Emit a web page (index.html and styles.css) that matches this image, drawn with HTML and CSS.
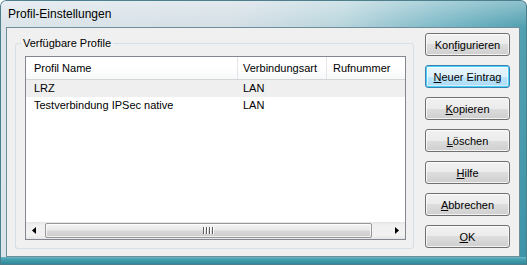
FILE: index.html
```html
<!DOCTYPE html>
<html lang="de">
<head>
  <meta charset="UTF-8">
  <title>Profil-Einstellungen</title>
  <link rel="stylesheet" href="styles.css">
</head>
<body>
  <div class="window">
    <div class="titlebar">Profil-Einstellungen</div>
    <div class="client">
      <fieldset class="group">
        <legend>Verfügbare Profile</legend>
        <div class="listview">
          <div class="lv-header">
            <div class="col col-name">Profil Name</div>
            <div class="col col-type">Verbindungsart</div>
            <div class="col col-num">Rufnummer</div>
          </div>
          <div class="lv-row hot">
            <div class="col col-name">LRZ</div>
            <div class="col col-type">LAN</div>
            <div class="col col-num"></div>
          </div>
          <div class="lv-row">
            <div class="col col-name">Testverbindung IPSec native</div>
            <div class="col col-type">LAN</div>
            <div class="col col-num"></div>
          </div>

          <!-- horizontale Scrollleiste -->
          <div class="hscroll">
            <div class="sb-btn">
              <svg width="5" height="7" viewBox="0 0 5 7"><path d="M4 0 L0 3.5 L4 7 Z" fill="#000"/></svg>
            </div>
            <div class="sb-track">
              <div class="sb-thumb">
                <span class="grip"><i></i><i></i><i></i><i></i></span>
              </div>
            </div>
            <div class="sb-btn">
              <svg width="5" height="7" viewBox="0 0 5 7"><path d="M1 0 L5 3.5 L1 7 Z" fill="#000"/></svg>
            </div>
          </div>
        </div>
      </fieldset>

      <div class="buttons">
        <button class="btn">Kon<u>f</u>igurieren</button>
        <button class="btn focus"><u>N</u>euer Eintrag</button>
        <button class="btn"><u>K</u>opieren</button>
        <button class="btn"><u>L</u>öschen</button>
        <button class="btn"><u>H</u>ilfe</button>
        <button class="btn"><u>A</u>bbrechen</button>
        <button class="btn"><u>O</u>K</button>
      </div>
    </div>
  </div>
</body>
</html>
```

FILE: styles.css
```css
body {
  margin: 0;
  font-family: "Liberation Sans", Arial, sans-serif;
  font-size: 11px;
  color: #000;
  background: #fff;
}

.window {
  width: 527px;
  height: 265px;
  box-sizing: border-box;
  padding: 0 7px 8px 6px;
  display: flex;
  flex-direction: column;
  background:
    linear-gradient(to top, #2c8596 0, #49a2b2 6px, #6fb6c3 8px, transparent 8px),
    linear-gradient(to bottom, rgba(255,255,255,0.35), rgba(255,255,255,0) 27px),
    linear-gradient(100deg, #dce5ea 0%, #d3dee5 42%, #b9d5dd 60%, #7ab8c6 78%, #3b93a6 100%);
  box-shadow: inset 0 0 0 1px #4d7f8c;
  border-radius: 6px 6px 0 0;
}

.titlebar {
  height: 27px;
  line-height: 28px;
  padding-left: 2px;
  font-size: 12px;
  color: #000;
}

.client {
  flex: 1;
  display: flex;
  align-items: flex-start;
  gap: 11px;
  padding: 5px 7px 7px 8px;
  background: #f0f0f0;
  border: 1px solid #6e8f9a;
}

.group {
  margin: 3px 0 0 0;
  width: 399px;
  height: 213px;
  box-sizing: border-box;
  padding: 0 5px 8px 5px;
  border: 1px solid #d5dfe5;
  border-radius: 3px;
  display: flex;
}

.group legend {
  padding: 0 2px;
  line-height: 14px;
}

.listview {
  margin: 6px 0 0 4px;
  width: 381px;
  height: 184px;
  box-sizing: border-box;
  border: 1px solid #828790;
  background: #fff;
  display: flex;
  flex-direction: column;
}

.lv-header {
  display: flex;
  height: 22px;
  border-bottom: 1px solid #d5d5d5;
  background: linear-gradient(#ffffff, #ffffff 50%, #f7f8f9);
}

.lv-header .col {
  line-height: 22px;
  border-right: 1px solid #e3e5e8;
}

.lv-header .col-num {
  border-right: 0;
}

.lv-row {
  display: flex;
  height: 17px;
  line-height: 17px;
}

.lv-row.hot {
  background: #efefef;
}

.col {
  box-sizing: border-box;
  white-space: nowrap;
}

.col-name {
  width: 212px;
  padding-left: 8px;
}

.col-type {
  width: 89px;
  padding-left: 5px;
}

.col-num {
  width: 70px;
  padding-left: 6px;
}

.hscroll {
  margin-top: auto;
  height: 17px;
  display: flex;
  background: linear-gradient(#e3e3e3, #f0f0f0 3px, #f2f2f2 13px, #e6e6e6);
}

.sb-btn {
  width: 17px;
  display: flex;
  align-items: center;
  justify-content: center;
}

.sb-track {
  flex: 1;
  padding: 1px 0 1px 2px;
  display: flex;
}

.sb-thumb {
  width: 327px;
  box-sizing: border-box;
  border: 1px solid #979797;
  border-radius: 2px;
  background: linear-gradient(#f4f4f4, #e9e9e9 45%, #d8d8d8 55%, #cdcdcd);
  box-shadow: inset 0 0 0 1px rgba(255,255,255,0.7);
  display: flex;
  align-items: center;
  justify-content: center;
}

.grip {
  display: flex;
  gap: 1px;
  height: 7px;
}

.grip i {
  width: 1px;
  background: #5f5f5f;
  box-shadow: 1px 0 0 #fff;
  margin-right: 1px;
}

.buttons {
  display: flex;
  flex-direction: column;
  gap: 9px;
}

.btn {
  width: 85px;
  height: 23px;
  padding: 0;
  font-family: inherit;
  font-size: 11px;
  color: #000;
  border: 1px solid #707070;
  border-radius: 3px;
  background: linear-gradient(#f2f2f2, #ebebeb 50%, #dddddd 50%, #cfcfcf);
  box-shadow: inset 0 0 0 1px rgba(255,255,255,0.75);
}

.btn.focus {
  border-color: #3c7fb1;
  background: linear-gradient(#e8f5fc, #dcf0fb 50%, #c0e6fb 50%, #a9daf4);
  box-shadow: inset 0 0 0 1px #48d1f8, inset 0 0 0 2px rgba(255,255,255,0.5);
}
```
